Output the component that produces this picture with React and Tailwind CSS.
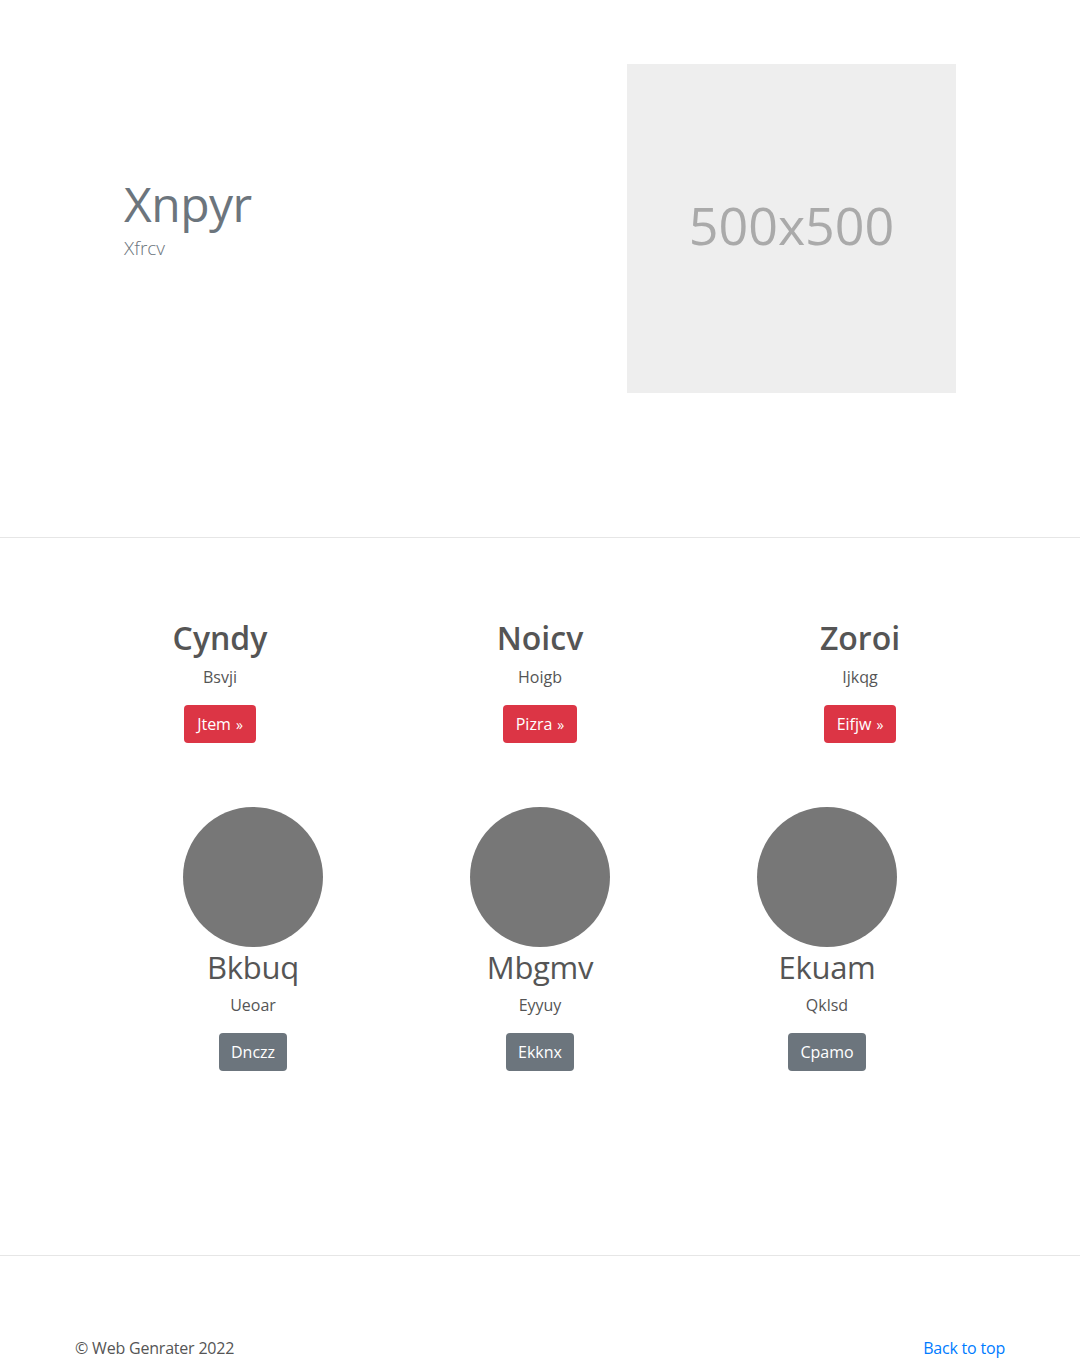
const font = { fontFamily: '"Open Sans", "Noto Sans", sans-serif' };

const features = [
  { title: 'Cyndy', sub: 'Bsvji', cta: 'Jtem' },
  { title: 'Noicv', sub: 'Hoigb', cta: 'Pizra' },
  { title: 'Zoroi', sub: 'Ijkqg', cta: 'Eifjw' },
];

const people = [
  { name: 'Bkbuq', sub: 'Ueoar', cta: 'Dnczz' },
  { name: 'Mbgmv', sub: 'Eyyuy', cta: 'Ekknx' },
  { name: 'Ekuam', sub: 'Qklsd', cta: 'Cpamo' },
];

const Hero = () => (
  <section className="border-b border-[#e6e6e6] pt-16 pb-[144px]">
    <div className="w-[960px] mx-auto flex items-center h-[329px]">
      <div className="w-[567px] pl-[64px] pb-[22px] flex flex-col">
        <h1 className="text-[48px] leading-[1.2] font-normal text-[#6c757d] tracking-[-0.5px]">Xnpyr</h1>
        <p className="text-[19px] leading-[1.2] font-light text-[#6c757d] mt-1">Xfrcv</p>
      </div>
      <div className="w-[329px] h-[329px] bg-[#eeeeee] flex items-center justify-center pb-2">
        <span className="text-[52px] text-[#aaaaaa] leading-none">500x500</span>
      </div>
    </div>
  </section>
);

const Features = () => (
  <div className="w-[960px] mx-auto grid grid-cols-3">
    {features.map((f) => (
      <div key={f.title} className="flex flex-col items-center text-center">
        <h2 className="text-[32px] leading-[1.2] font-semibold text-[#555555] mb-2">{f.title}</h2>
        <p className="text-base leading-6 text-[#555555] mb-4">{f.sub}</p>
        <a className="h-[38px] px-[13px] flex items-center rounded bg-[#dc3545] text-white text-base">
          {f.cta}<span className="ml-[5px] text-[14px]">»</span>
        </a>
      </div>
    ))}
  </div>
);

const People = () => (
  <div className="w-[861px] mx-auto grid grid-cols-3 mt-16">
    {people.map((p) => (
      <div key={p.name} className="flex flex-col items-center text-center">
        <div className="w-[140px] h-[140px] rounded-full bg-[#777777]" />
        <h3 className="text-[31px] leading-[1.2] font-normal text-[#555555] mt-0.5 mb-1.5 tracking-[-0.3px]">{p.name}</h3>
        <p className="text-base leading-6 text-[#555555] mb-4">{p.sub}</p>
        <a className="h-[38px] px-3 flex items-center rounded bg-[#6c757d] text-white text-base">{p.cta}</a>
      </div>
    ))}
  </div>
);

export default function App() {
  return (
    <div style={font} className="bg-white min-h-[1360px]">
      <Hero />
      <section className="border-b border-[#e6e6e6] pt-[81px] pb-[184px]">
        <Features />
        <People />
      </section>
      <footer className="w-[960px] mx-auto px-[15px] pt-[80px] flex justify-between text-base leading-6 tracking-[-0.2px]">
        <p className="text-[#555555]">© Web Genrater 2022</p>
        <a className="text-[#007bff]">Back to top</a>
      </footer>
    </div>
  );
}
